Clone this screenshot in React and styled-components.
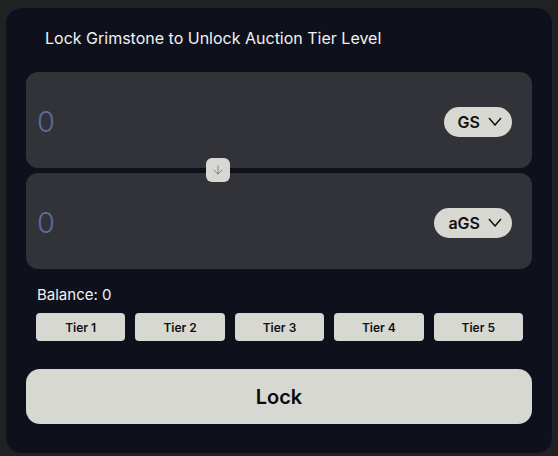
import React from "react";
import styled, { createGlobalStyle } from "styled-components";
import { ArrowDown } from "lucide-react";

const GlobalStyle = createGlobalStyle`
  html, body {
    margin: 0;
    padding: 0;
    background: #202121;
    font-family: Inter, "Liberation Sans", sans-serif;
  }
`;

const tiers = ["Tier 1", "Tier 2", "Tier 3", "Tier 4", "Tier 5"];

const App = () => {
  return (
    <Page>
      <GlobalStyle />
      <Card>
        <Title>Lock Grimstone to Unlock Auction Tier Level</Title>
        <Boxes>
          <AmountBox>
            <Amount>0</Amount>
            <TokenPill>
              GS
              <Chevron />
            </TokenPill>
          </AmountBox>
          <SwapButton>
            <ArrowDown size={14} strokeWidth={1.5} />
          </SwapButton>
          <AmountBox>
            <Amount>0</Amount>
            <TokenPill>
              aGS
              <Chevron />
            </TokenPill>
          </AmountBox>
        </Boxes>
        <Balance>Balance: 0</Balance>
        <TierRow>
          {tiers.map((t) => (
            <TierButton key={t}>{t}</TierButton>
          ))}
        </TierRow>
        <LockButton>Lock</LockButton>
      </Card>
    </Page>
  );
};

const Chevron = () => (
  <svg width="14" height="9" viewBox="0 0 14 9" fill="none">
    <polyline
      points="1,1 7,8 13,1"
      stroke="#111"
      strokeWidth="1.5"
      strokeLinejoin="miter"
    />
  </svg>
);

export default App;

const Page = styled.div`
  padding: 7px 5px 2px 5px;
`;

const Card = styled.div`
  box-sizing: border-box;
  width: 548px;
  height: 447px;
  background: #0e111c;
  border: 1px solid #1d2435;
  border-radius: 16px;
  padding: 20px 20px 0 20px;
  display: flex;
  flex-direction: column;
`;

const Title = styled.div`
  margin-left: 19px;
  font-size: 16px;
  line-height: 20px;
  color: #f2f2f2;
`;

const Boxes = styled.div`
  position: relative;
  margin-top: 24px;
  display: flex;
  flex-direction: column;
  gap: 5px;
`;

const AmountBox = styled.div`
  height: 96px;
  border-radius: 12px;
  background: #313338;
  display: flex;
  align-items: center;
  justify-content: space-between;
  padding: 3px 20px 0 11px;
  box-sizing: border-box;
`;

const Amount = styled.div`
  font-size: 29px;
  font-weight: 300;
  color: #5b6b96;
`;

const TokenPill = styled.button`
  height: 30px;
  border-radius: 15px;
  border: none;
  background: #d7d8d2;
  color: #111;
  font-family: inherit;
  font-size: 16px;
  font-weight: 600;
  padding: 0 10px 0 14px;
  display: flex;
  align-items: center;
  gap: 8px;
`;

const SwapButton = styled.div`
  position: absolute;
  left: 180px;
  top: 86px;
  width: 24px;
  height: 24px;
  border-radius: 6px;
  background: #d7d8d2;
  color: #6f7491;
  display: flex;
  align-items: center;
  justify-content: center;
`;

const Balance = styled.div`
  margin: 16px 0 0 11px;
  font-size: 15px;
  line-height: 20px;
  color: #f2f2f2;
`;

const TierRow = styled.div`
  margin: 8px 9px 0 10px;
  display: grid;
  grid-template-columns: repeat(5, 1fr);
  gap: 10px;
`;

const TierButton = styled.button`
  height: 28px;
  border: none;
  border-radius: 4px;
  background: #d7d8d2;
  color: #111;
  font-family: inherit;
  font-size: 12px;
  font-weight: 600;
`;

const LockButton = styled.button`
  margin-top: 28px;
  height: 55px;
  border: none;
  border-radius: 14px;
  background: #d7d8d2;
  color: #0a0a0a;
  font-family: inherit;
  font-size: 20px;
  font-weight: 600;
`;
